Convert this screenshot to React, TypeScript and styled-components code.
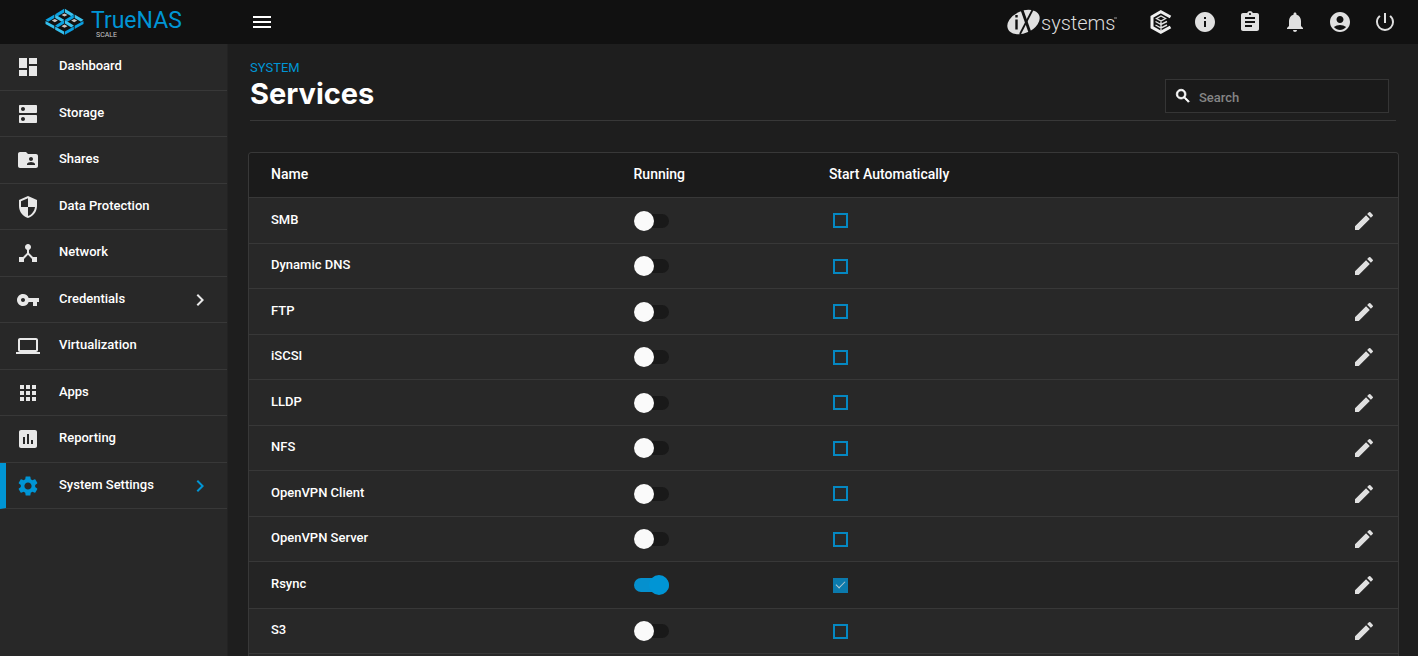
import React, { useState } from "react";
import styled, { createGlobalStyle, css } from "styled-components";
import type { IconType } from "react-icons";
import {
  MdDashboard, MdDns, MdFolderShared, MdSecurity, MdDeviceHub, MdVpnKey,
  MdLaptop, MdApps, MdAssessment, MdSettings, MdChevronRight, MdMenu, MdInfo,
  MdAssignment, MdNotifications, MdAccountCircle, MdPowerSettingsNew, MdSearch, MdEdit,
} from "react-icons/md";

const colors = {
  topbar: "#111111",
  page: "#1e1e1e",
  panel: "#282828",
  head: "#1b1b1b",
  line: "#383838",
  text: "#ffffff",
  accent: "#0095d5",
};

const GlobalStyle = createGlobalStyle`
  * { box-sizing: border-box; }
  body {
    margin: 0;
    background: ${colors.page};
    color: ${colors.text};
    font-family: Roboto, "Liberation Sans", sans-serif;
    font-size: 13px;
    font-weight: 500;
    line-height: 20px;
  }
  button, input { font: inherit; color: inherit; }
`;

const Shell = styled.div`
  display: grid;
  grid-template: 44px 1fr / 228px 1fr;
  height: 100vh;
  overflow: hidden;
`;

const Brand = styled.a`
  display: flex;
  align-items: flex-start;
  gap: 7px;
  padding: 8px 0 0 45px;
  background: ${colors.topbar};
  color: ${colors.accent};
  text-decoration: none;
`;

const Wordmark = styled.span`
  display: flex;
  flex-direction: column;
  padding-top: 2px;
  font-size: 23px;
  font-weight: 400;
  line-height: 22px;
`;

const Edition = styled.span`
  padding-left: 5px;
  font-size: 7px;
  line-height: 6px;
  color: #c8c8c8;
`;

const Topbar = styled.header`
  display: flex;
  align-items: center;
  justify-content: space-between;
  padding: 0 21px 0 22px;
  background: ${colors.topbar};
`;

const Tools = styled.div`
  display: flex;
  align-items: center;
  gap: 21px;
`;

const Vendor = styled.a`
  display: flex;
  margin-right: 8px;
`;

const IconButton = styled.button<{ $tone?: string }>`
  display: inline-flex;
  align-items: center;
  justify-content: center;
  padding: 0;
  border: 0;
  background: none;
  color: ${(p) => p.$tone ?? "#e0e0e0"};
  vertical-align: middle;
  cursor: pointer;
`;

const Sidebar = styled.nav`
  background: ${colors.panel};
  border-right: 1px solid #232323;
`;

const NavList = styled.ul`
  margin: 0;
  padding: 0;
  list-style: none;
`;

const NavLink = styled.a<{ $active: boolean }>`
  display: flex;
  align-items: center;
  height: 46px;
  padding: 0 15px 0 16px;
  border-bottom: 1px solid ${colors.line};
  color: ${colors.text};
  text-decoration: none;
  li:nth-child(odd) > & { height: 47px; }
  svg { flex: none; color: #e8e8e8; }
  ${(p) => p.$active && css`
    padding-left: 10px;
    border-left: 6px solid ${colors.accent};
    svg { color: ${colors.accent}; }
  `}
`;

const NavText = styled.span`
  flex: 1;
  padding: 0 0 2px 19px;
`;

const Main = styled.main`
  display: flex;
  flex-direction: column;
  min-height: 0;
  padding: 14px 19px 0 20px;
  overflow: hidden;
`;

const PageHead = styled.div`
  display: flex;
  align-items: flex-end;
  justify-content: space-between;
  margin: 0 3px 31px 2px;
  padding: 0 7px 7px 0;
  border-bottom: 1px solid ${colors.line};
`;

const Crumb = styled.a`
  display: block;
  font-weight: 400;
  color: ${colors.accent};
  text-decoration: none;
`;

const Title = styled.h1`
  margin: 0;
  padding-bottom: 3px;
  font-family: Inter, sans-serif;
  font-size: 29px;
  font-weight: 700;
  line-height: 32px;
`;

const SearchBox = styled.label`
  display: flex;
  align-items: center;
  gap: 7px;
  width: 224px;
  height: 34px;
  padding-left: 8px;
  border: 1px solid #353535;
  background: #1a1a1a;
  svg { flex: none; }
  path:last-child { stroke: #fff; stroke-width: 1px; }
`;

const SearchInput = styled.input`
  min-width: 0;
  padding: 4px 0 0;
  border: 0;
  outline: 0;
  background: none;
  &::placeholder { color: #858585; opacity: 1; }
`;

const Card = styled.section`
  flex: 1;
  border: 1px solid ${colors.line};
  border-radius: 4px 4px 0 0;
  border-bottom: 0;
  background: ${colors.panel};
  overflow: hidden;
`;

const Table = styled.table`
  width: 100%;
  table-layout: fixed;
  border-collapse: separate;
  border-spacing: 0;
`;

const HeadCell = styled.th<{ $width?: string }>`
  width: ${(p) => p.$width ?? "auto"};
  height: 45px;
  padding: 0 0 2px 22px;
  border-bottom: 1px solid ${colors.line};
  background: ${colors.head};
  text-align: left;
  font-size: 14px;
  font-weight: 500;
`;

const Cell = styled.td`
  height: 45px;
  padding: 0 0 0 22px;
  border-bottom: 1px solid ${colors.line};
  vertical-align: middle;
  &:first-child { padding-bottom: 2px; }
  &:last-child { padding-right: 22px; text-align: right; }
`;

const Row = styled.tr<{ $selected: boolean }>`
  background: ${(p) => (p.$selected ? "#242424" : "transparent")};
  &:nth-child(odd) > td { height: ${(p) => (p.$selected ? 47 : 46)}px; }
`;

const Switch = styled.input`
  appearance: none;
  display: grid;
  align-items: center;
  width: 35px;
  height: 20px;
  margin: 0;
  cursor: pointer;
  &::before, &::after {
    content: "";
    grid-area: 1 / 1;
    border-radius: 10px;
  }
  &::before {
    height: 14px;
    background: #191919;
  }
  &::after {
    width: 20px;
    height: 20px;
    background: #fafafa;
  }
  &:checked::before { background: #0590ce; }
  &:checked::after { justify-self: end; background: ${colors.accent}; }
`;

const Box = styled.input`
  appearance: none;
  display: grid;
  place-items: center;
  width: 15px;
  height: 15px;
  margin: 0 0 0 4px;
  border: 2px solid #0588c2;
  cursor: pointer;
  &:checked { background: #0b7aad; border-color: #0b7aad; }
  &:checked::before {
    content: "";
    width: 8px;
    height: 4px;
    margin-bottom: 3px;
    border: solid #b5c8d0;
    border-width: 0 0 1px 1px;
    transform: rotate(-45deg);
  }
`;

/* Four isometric bays around a centre point; only the outer bays show front walls. */
function TrueNasMark() {
  const bays = [
    { x: 19.5, y: 7, left: false, right: false },
    { x: 9.8, y: 12.6, left: true, right: false },
    { x: 29.2, y: 12.6, left: false, right: true },
    { x: 19.5, y: 18.2, left: true, right: true },
  ];
  return (
    <svg width="39" height="27" viewBox="0 0 39 27" aria-hidden="true">
      {bays.map(({ x, y, left, right }) => (
        <g key={`${x}-${y}`} transform={`translate(${x} ${y})`}>
          <path d="M-9.3-.8-.4-6.200v3.600l-6.400 3.800Z" fill="#0aa2e2" />
          <path d="M9.3-.8.4-6.200v3.600l6.400 3.800Z" fill="#3cc4f0" />
          <path d="M0-1.600 3 0 0 1.600-3 0Z" fill="#c9c4c2" />
          {left && <path d="M-9.300.3-.4 5.200v3.300l-8.900-5Z" fill="#35c0ee" />}
          {right && <path d="M9.300.3.4 5.200v3.300l8.900-5Z" fill="#0a9ee0" />}
        </g>
      ))}
    </svg>
  );
}

function IxLogo() {
  return (
    <svg width="112" height="30" viewBox="0 0 112 30" role="img" aria-label="iXsystems">
      <ellipse cx="16.500" cy="15" rx="17" ry="11" transform="rotate(-24 16.500 15)" fill="#e0e0e0" />
      <g stroke="#111" fill="none">
        <path d="M9.500 12.500v10M9.500 8v2.500" strokeWidth="2.400" />
        <path d="M15 3 23.500 27" strokeWidth="2.800" />
        <path d="M26 2 13 27" strokeWidth="1.800" />
      </g>
      <text x="34" y="23" fontFamily="Roboto" fontWeight="300" fontSize="20" fill="#dcdcdc">systems</text>
      <path d="M107 11h3" stroke="#999" />
    </svg>
  );
}

function TrueCommandIcon() {
  return (
    <svg width="24" height="26" viewBox="0 0 24 26" fill="none" aria-hidden="true">
      <path d="M22.500 8 12.800 2.800 4 7.800v10.500l8.800 5 9.700-5.300" stroke="#f0f0f0" strokeWidth="3" />
      <path d="m8.500 9.500 4.500-2.500 4.500 2.500-4.500 2.500ZM7.500 12.500l5.500 3 6-3M7.500 16l5.500 3 6-3M13 12v10" stroke="#e0e0e0" strokeWidth="1.400" />
    </svg>
  );
}

const navItems: { label: string; icon: IconType; nested?: boolean; active?: boolean }[] = [
  { label: "Dashboard", icon: MdDashboard },
  { label: "Storage", icon: MdDns },
  { label: "Shares", icon: MdFolderShared },
  { label: "Data Protection", icon: MdSecurity },
  { label: "Network", icon: MdDeviceHub },
  { label: "Credentials", icon: MdVpnKey, nested: true },
  { label: "Virtualization", icon: MdLaptop },
  { label: "Apps", icon: MdApps },
  { label: "Reporting", icon: MdAssessment },
  { label: "System Settings", icon: MdSettings, nested: true, active: true },
];

const tools: { label: string; icon: IconType }[] = [
  { label: "Info", icon: MdInfo },
  { label: "Tasks", icon: MdAssignment },
  { label: "Alerts", icon: MdNotifications },
  { label: "Account", icon: MdAccountCircle },
  { label: "Power", icon: MdPowerSettingsNew },
];

const services = ["SMB", "Dynamic DNS", "FTP", "iSCSI", "LLDP", "NFS", "OpenVPN Client", "OpenVPN Server", "Rsync", "S3"];

function ServiceRow({ name }: { name: string }) {
  const enabled = name === "Rsync";
  const [running, setRunning] = useState(enabled);
  const [auto, setAuto] = useState(enabled);
  return (
    <Row $selected={enabled}>
      <Cell>{name}</Cell>
      <Cell>
        <Switch type="checkbox" role="switch" aria-label={`${name} running`} checked={running} onChange={() => setRunning(!running)} />
      </Cell>
      <Cell>
        <Box type="checkbox" aria-label={`Start ${name} automatically`} checked={auto} onChange={() => setAuto(!auto)} />
      </Cell>
      <Cell>
        <IconButton aria-label={`Edit ${name}`}><MdEdit size={24} /></IconButton>
      </Cell>
    </Row>
  );
}

export default function App() {
  return (
    <>
      <GlobalStyle />
      <Shell>
        <Brand href="#">
          <TrueNasMark />
          <Wordmark>TrueNAS<Edition>SCALE</Edition></Wordmark>
        </Brand>
        <Topbar>
          <IconButton $tone="#ffffff" aria-label="Toggle menu"><MdMenu size={24} /></IconButton>
          <Tools>
            <Vendor href="#"><IxLogo /></Vendor>
            <IconButton aria-label="TrueCommand"><TrueCommandIcon /></IconButton>
            {tools.map(({ label, icon: Icon }) => (
              <IconButton key={label} aria-label={label}><Icon size={24} /></IconButton>
            ))}
          </Tools>
        </Topbar>
        <Sidebar>
          <NavList>
            {navItems.map(({ label, icon: Icon, nested, active }) => (
              <li key={label}>
                <NavLink href="#" $active={!!active}>
                  <Icon size={24} />
                  <NavText>{label}</NavText>
                  {nested && <MdChevronRight size={24} />}
                </NavLink>
              </li>
            ))}
          </NavList>
        </Sidebar>
        <Main>
          <PageHead>
            <div>
              <Crumb href="#">SYSTEM</Crumb>
              <Title>Services</Title>
            </div>
            <SearchBox>
              <MdSearch size={18} />
              <SearchInput type="text" placeholder="Search" aria-label="Search" />
            </SearchBox>
          </PageHead>
          <Card>
            <Table>
              <thead>
                <tr>
                  <HeadCell>Name</HeadCell>
                  <HeadCell $width="17%">Running</HeadCell>
                  <HeadCell $width="37%">Start Automatically</HeadCell>
                  <HeadCell $width="166px" aria-label="Actions" />
                </tr>
              </thead>
              <tbody>
                {services.map((name) => <ServiceRow key={name} name={name} />)}
              </tbody>
            </Table>
          </Card>
        </Main>
      </Shell>
    </>
  );
}
